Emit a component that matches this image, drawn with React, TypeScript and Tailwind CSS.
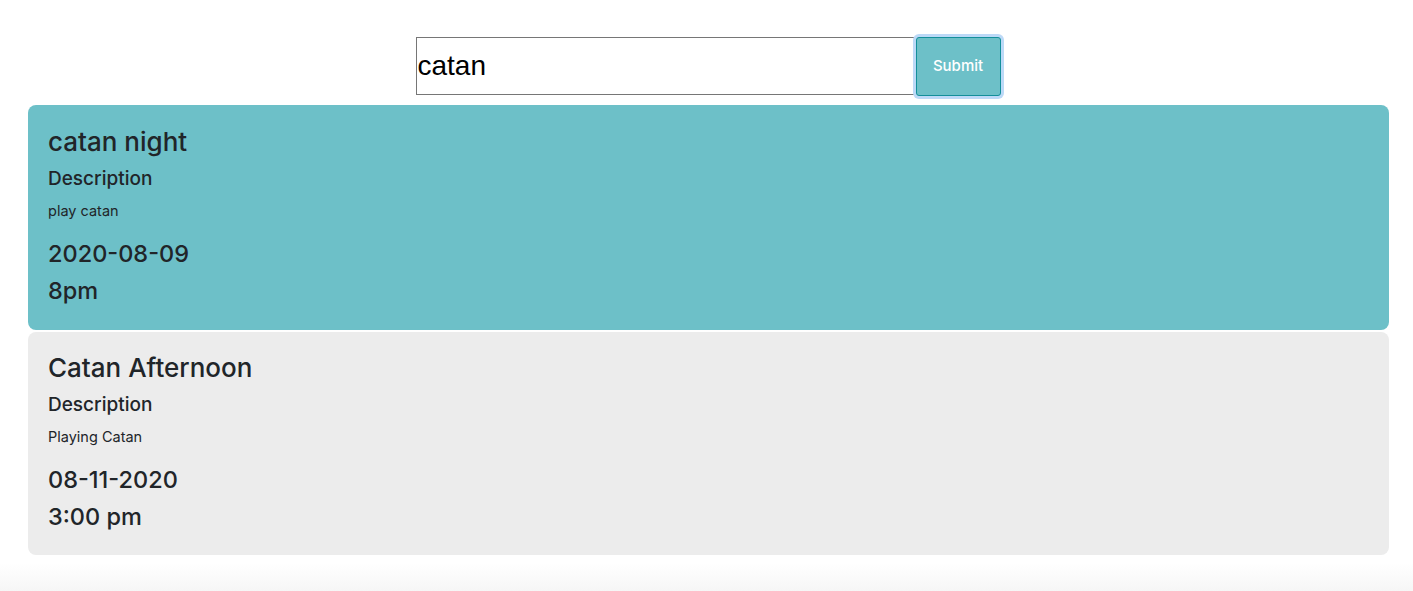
import { useState } from "react";

type Event = {
  title: string;
  description: string;
  date: string;
  time: string;
};

const events: Event[] = [
  { title: "catan night", description: "play catan", date: "2020-08-09", time: "8pm" },
  { title: "Catan Afternoon", description: "Playing Catan", date: "08-11-2020", time: "3:00 pm" },
];

function EventCard({ event, active }: { event: Event; active: boolean }) {
  return (
    <div
      className={
        active
          ? "rounded-lg bg-[#6dc0c8] px-5 pt-5 pb-[17px] text-[#212529]"
          : "rounded-lg bg-[#ececec] px-5 pt-[19px] pb-4 text-[#212529]"
      }
    >
      <h3 className="mb-2 text-[26px] leading-[34px] font-medium">{event.title}</h3>
      <h5 className="mb-2 text-[19px] leading-6 font-medium">Description</h5>
      <p className="mb-4 text-[14.5px] leading-6">{event.description}</p>
      <h4 className="mb-2 text-[23.5px] leading-[29px] font-medium">{event.date}</h4>
      <h4 className="mb-2 text-[23.5px] leading-[29px] font-medium">{event.time}</h4>
    </div>
  );
}

export default function App() {
  const [query, setQuery] = useState("catan");

  return (
    <div className="flex h-[591px] flex-col bg-white font-['Inter',sans-serif]">
      <form
        onSubmit={e => e.preventDefault()}
        className="flex justify-center pt-[37px] pb-[9px] pl-[3px]"
      >
        <input
          className="h-[58px] w-[500px] border border-[#767676] px-[1px] font-['Liberation_Sans',sans-serif] text-[28px] text-black outline-none"
          value={query}
          onChange={e => setQuery(e.target.value)}
        />
        <button
          type="submit"
          className="h-[59px] w-[85px] rounded-[3px] border border-[#138f9b] bg-[#6dc0c8] text-[15px] font-medium text-white ring-[3px] ring-[#bcd9f7]"
        >
          Submit
        </button>
      </form>
      <div className="flex flex-col gap-[2px] pr-6 pl-7">
        {events.map((ev, i) => (
          <EventCard key={ev.title} event={ev} active={i === 0} />
        ))}
      </div>
      <div className="mt-auto h-[28px] bg-gradient-to-b from-white to-[#f6f6f6]" />
    </div>
  );
}
